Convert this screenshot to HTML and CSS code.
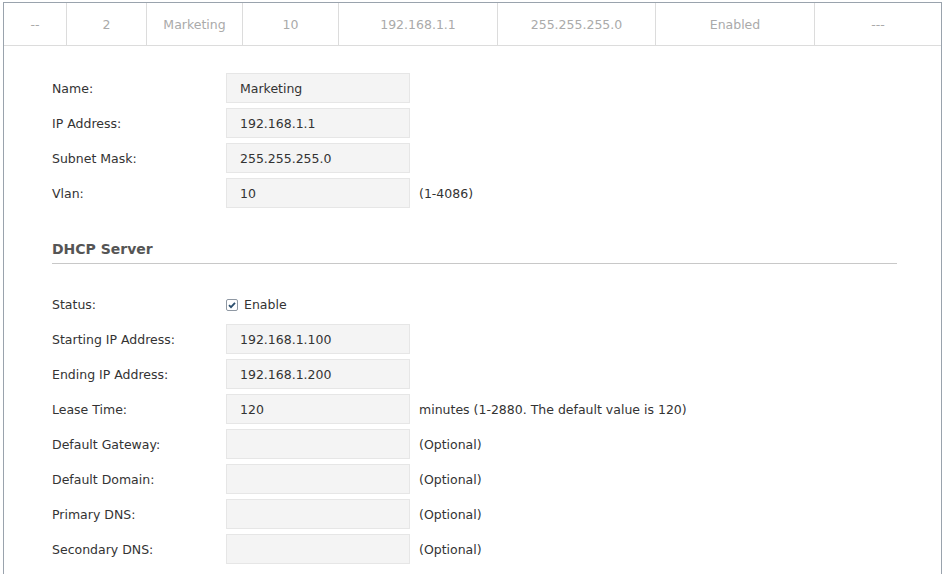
FILE: index.html
```html
<!DOCTYPE html>
<html lang="en">
<head>
    <meta charset="UTF-8">
    <title>Interface</title>
    <link rel="stylesheet" href="styles.css">
</head>
<body>
    <div class="panel">
        <div class="table-row">
            <div class="cell">--</div>
            <div class="cell">2</div>
            <div class="cell">Marketing</div>
            <div class="cell">10</div>
            <div class="cell">192.168.1.1</div>
            <div class="cell">255.255.255.0</div>
            <div class="cell">Enabled</div>
            <div class="cell">---</div>
        </div>
        <div class="form">
            <div class="form-row">
                <label class="label">Name:</label>
                <div class="field">Marketing</div>
            </div>
            <div class="form-row">
                <label class="label">IP Address:</label>
                <div class="field">192.168.1.1</div>
            </div>
            <div class="form-row">
                <label class="label">Subnet Mask:</label>
                <div class="field">255.255.255.0</div>
            </div>
            <div class="form-row">
                <label class="label">Vlan:</label>
                <div class="field">10</div>
                <span class="hint">(1-4086)</span>
            </div>

            <div class="section-title">DHCP Server</div>

            <div class="form-row status-row">
                <label class="label">Status:</label>
                <span class="check">
                    <svg width="12" height="12" viewBox="0 0 12 12">
                        <rect x="0.5" y="0.5" width="11" height="11" rx="1.5" fill="#fff" stroke="#8f98a3"/>
                        <path d="M3 6.2 L5 8.2 L9 3.8" fill="none" stroke="#2d4f6e" stroke-width="1.8"/>
                    </svg>
                    Enable
                </span>
            </div>
            <div class="form-row">
                <label class="label">Starting IP Address:</label>
                <div class="field">192.168.1.100</div>
            </div>
            <div class="form-row">
                <label class="label">Ending IP Address:</label>
                <div class="field">192.168.1.200</div>
            </div>
            <div class="form-row">
                <label class="label">Lease Time:</label>
                <div class="field">120</div>
                <span class="hint">minutes (1-2880. The default value is 120)</span>
            </div>
            <div class="form-row">
                <label class="label">Default Gateway:</label>
                <div class="field"></div>
                <span class="hint">(Optional)</span>
            </div>
            <div class="form-row">
                <label class="label">Default Domain:</label>
                <div class="field"></div>
                <span class="hint">(Optional)</span>
            </div>
            <div class="form-row">
                <label class="label">Primary DNS:</label>
                <div class="field"></div>
                <span class="hint">(Optional)</span>
            </div>
            <div class="form-row">
                <label class="label">Secondary DNS:</label>
                <div class="field"></div>
                <span class="hint">(Optional)</span>
            </div>
        </div>
    </div>
</body>
</html>
```

FILE: styles.css
```css
body {
    margin: 0;
    background: #fff;
    font-family: "DejaVu Sans", Verdana, sans-serif;
    font-size: 12.5px;
    color: #333;
    overflow: hidden;
}

.panel {
    margin: 2px 4px 0 3px;
    border: 1px solid #9aa3ad;
    border-bottom: none;
    height: 600px;
}

.table-row {
    display: grid;
    grid-template-columns: 63px 80px 96px 96px 159px 158px 159px 1fr;
    height: 42px;
    border-bottom: 1px solid #dcdcdc;
}

.cell {
    display: flex;
    align-items: center;
    justify-content: center;
    padding-top: 1px;
    color: #aaa;
    border-right: 1px solid #dcdcdc;
}

.cell:last-child {
    border-right: none;
}

.form {
    padding: 27px 44px 0 48px;
    display: flex;
    flex-direction: column;
    gap: 5px;
}

.form-row {
    display: flex;
    align-items: center;
    height: 30px;
}

.label {
    width: 174px;
    flex-shrink: 0;
}

.field {
    width: 169px;
    height: 28px;
    line-height: 30px;
    padding-left: 13px;
    background: #f4f4f4;
    border: 1px solid #e6e6e6;
    overflow: hidden;
}

.hint {
    margin-left: 9px;
}

.section-title {
    margin-top: 28px;
    padding-bottom: 5px;
    border-bottom: 1px solid #c8c8c8;
    font-size: 14px;
    font-weight: bold;
    color: #555;
    line-height: 17px;
}

.status-row {
    margin-top: 20px;
}

.check {
    display: flex;
    align-items: center;
    gap: 6px;
    line-height: 16px;
    padding-top: 2px;
}
```
